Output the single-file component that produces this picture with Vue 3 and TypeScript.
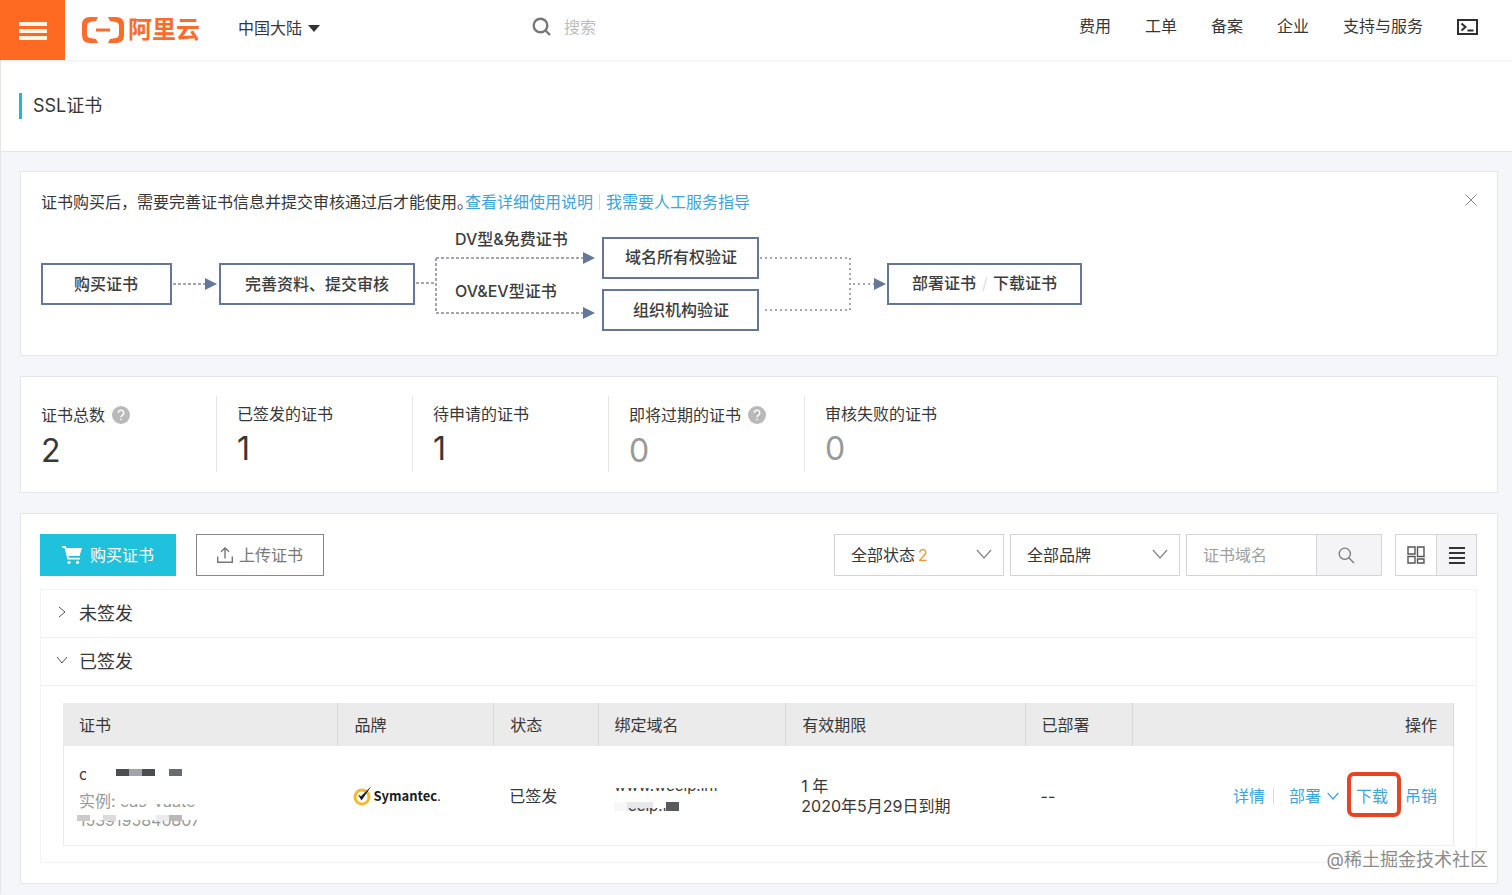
<script setup lang="ts">
import { ref } from 'vue'

interface Stat {
  label: string
  value: number
  help?: boolean
}

const navItems: string[] = ['费用', '工单', '备案', '企业', '支持与服务']

const stats: Stat[] = [
  { label: '证书总数', value: 2, help: true },
  { label: '已签发的证书', value: 1 },
  { label: '待申请的证书', value: 1 },
  { label: '即将过期的证书', value: 0, help: true },
  { label: '审核失败的证书', value: 0 },
]

const columns: string[] = ['证书', '品牌', '状态', '绑定域名', '有效期限', '已部署', '操作']

const noticeOpen = ref(true)
const pendingOpen = ref(false)
const issuedOpen = ref(true)
const view = ref<'grid' | 'list'>('list')
const keyword = ref('')
const domain = ref('')
</script>

<template>
  <div class="page">
    <header class="topbar">
      <button class="menu" type="button" aria-label="菜单"><i></i><i></i><i></i></button>
      <a class="logo" href="#">
        <svg width="42" height="28" viewBox="0 0 42 28" aria-hidden="true">
          <path d="M16 1H8Q0 1 0 9v10q0 8 8 8h8l-2-4-6-1q-3-1-3-4v-8q0-3 3-4l6-1z" />
          <path d="M26 1h8q8 0 8 8v10q0 8-8 8h-8l2-4 6-1q3-1 3-4v-8q0-3-3-4l-6-1z" />
          <path d="M14 12.500h14v3H14z" />
        </svg>
        <span>阿里云</span>
      </a>
      <button class="region" type="button">
        中国大陆
        <svg width="12" height="7" viewBox="0 0 12 7" aria-hidden="true"><path d="M0 0h12L6 7z" /></svg>
      </button>
      <label class="search">
        <svg width="20" height="20" viewBox="0 0 20 20" aria-hidden="true">
          <circle cx="8.500" cy="8.500" r="6.800" />
          <path d="M13.500 13.500l4.500 4.500" />
        </svg>
        <input v-model="keyword" type="text" placeholder="搜索" aria-label="搜索" />
      </label>
      <nav class="nav">
        <a v-for="item in navItems" :key="item" href="#">{{ item }}</a>
        <button type="button" aria-label="云命令行">
          <svg width="21" height="16" viewBox="0 0 21 16" aria-hidden="true">
            <rect x="1" y="1" width="19" height="14" />
            <path d="M4.500 4.500l4 3.500-4 3.500M10.500 11.500h6" />
          </svg>
        </button>
      </nav>
    </header>

    <div class="title-bar"><h1>SSL证书</h1></div>

    <main>
      <section v-if="noticeOpen" class="panel notice">
        <p>
          <span>证书购买后，需要完善证书信息并提交审核通过后才能使用。</span>
          <a class="guide" href="#">查看详细使用说明</a>
          <i class="sep"></i>
          <a href="#">我需要人工服务指导</a>
        </p>
        <button class="close" type="button" aria-label="关闭" @click="noticeOpen = false">
          <svg width="12" height="12" viewBox="0 0 12 12" aria-hidden="true"><path d="M.5.5l11 11M11.500.5l-11 11" /></svg>
        </button>
        <svg class="flow" width="1042" height="102" viewBox="0 0 1042 102" role="img" aria-label="证书申请流程">
          <g class="boxes">
            <rect x="1" y="34" width="129" height="40" />
            <rect x="179" y="34" width="194" height="40" />
            <rect x="562" y="8" width="155" height="40" />
            <rect x="562" y="60" width="155" height="40" />
            <rect x="847" y="34" width="193" height="40" />
          </g>
          <g class="dashes">
            <path d="M132 54h32M375 53h20M395 28v55M395 28h147M395 83h147" />
          </g>
          <g class="dots">
            <path d="M719 28h90v52h-88M812 54h21" />
          </g>
          <g class="heads">
            <path d="M164 48l12 6-12 6zM542 22l12 6-12 6zM542 77l12 6-12 6zM833 48l12 6-12 6z" />
          </g>
          <g class="labels">
            <text x="65" y="60" text-anchor="middle">购买证书</text>
            <text x="276" y="60" text-anchor="middle">完善资料、提交审核</text>
            <text x="414" y="15">DV型&amp;免费证书</text>
            <text x="414" y="67">OV&amp;EV型证书</text>
            <text x="640" y="33" text-anchor="middle">域名所有权验证</text>
            <text x="640" y="86" text-anchor="middle">组织机构验证</text>
            <text x="903" y="59" text-anchor="middle">部署证书</text>
            <text class="slash" x="944" y="59" text-anchor="middle">/</text>
            <text x="984" y="59" text-anchor="middle">下载证书</text>
          </g>
        </svg>
      </section>

      <section class="panel stats">
        <div v-for="s in stats" :key="s.label" class="stat">
          <div class="stat-label" :class="{ help: s.help }">
            {{ s.label }}
            <svg v-if="s.help" width="18" height="18" viewBox="0 0 18 18" aria-hidden="true">
              <circle cx="9" cy="9" r="9" />
              <path d="M6.300 7a2.700 2.700 0 1 1 4 2.300c-.9.5-1.300.9-1.300 2M9 12.800v1.400" />
            </svg>
          </div>
          <div class="stat-value" :class="{ zero: s.value === 0 }">{{ s.value }}</div>
        </div>
      </section>

      <section class="panel list">
        <div class="toolbar">
          <button class="buy" type="button">
            <svg width="20" height="18" viewBox="0 0 20 18" aria-hidden="true">
              <path d="M0 0h3.500l1 2H20l-2.500 8H6.500l.4 1.800H18v1.700H5.500L2.500 1.700H0z" />
              <circle cx="7" cy="16.300" r="1.600" />
              <circle cx="15.500" cy="16.300" r="1.600" />
            </svg>
            购买证书
          </button>
          <button class="upload" type="button">
            <svg width="16" height="16" viewBox="0 0 16 16" aria-hidden="true">
              <path d="M.7 9.500v5.800h14.600V9.500M8 11.500V1M4 4.800L8 .9l4 3.900" />
            </svg>
            上传证书
          </button>
          <div class="filters">
            <div class="select">
              <select aria-label="状态"><option>全部状态</option></select>
              <span class="count">2</span>
              <svg width="16" height="10" viewBox="0 0 16 10" aria-hidden="true"><path d="M1 1l7 8 7-8" /></svg>
            </div>
            <div class="select">
              <select aria-label="品牌"><option>全部品牌</option></select>
              <svg width="16" height="10" viewBox="0 0 16 10" aria-hidden="true"><path d="M1 1l7 8 7-8" /></svg>
            </div>
            <div class="domain">
              <input v-model="domain" type="text" placeholder="证书域名" aria-label="证书域名" />
              <button type="button" aria-label="查询">
                <svg width="17" height="17" viewBox="0 0 17 17" aria-hidden="true">
                  <circle cx="6.800" cy="6.800" r="5.600" />
                  <path d="M11 11l5 5" />
                </svg>
              </button>
            </div>
            <div class="views">
              <button type="button" aria-label="卡片" :class="{ on: view === 'grid' }" @click="view = 'grid'">
                <svg width="18" height="18" viewBox="0 0 18 18" aria-hidden="true">
                  <path d="M1 1h7v7H1zM10.500 1H17v9.500h-6.500zM1 10.500h7V17H1zM10.500 13H17v4h-6.500z" />
                </svg>
              </button>
              <button type="button" aria-label="列表" :class="{ on: view === 'list' }" @click="view = 'list'">
                <svg width="16" height="17" viewBox="0 0 16 17" aria-hidden="true">
                  <path class="bars" d="M0 1h16M0 6h16M0 11h16M0 16h16" />
                </svg>
              </button>
            </div>
          </div>
        </div>

        <div class="groups">
          <button class="group" type="button" :aria-expanded="pendingOpen" @click="pendingOpen = !pendingOpen">
            <svg width="12" height="12" viewBox="0 0 12 12" aria-hidden="true">
              <path :d="pendingOpen ? 'M1 3l5 6 5-6' : 'M3 1l6 5-6 5'" />
            </svg>
            未签发
          </button>
          <button class="group" type="button" :aria-expanded="issuedOpen" @click="issuedOpen = !issuedOpen">
            <svg width="12" height="12" viewBox="0 0 12 12" aria-hidden="true">
              <path :d="issuedOpen ? 'M1 3l5 6 5-6' : 'M3 1l6 5-6 5'" />
            </svg>
            已签发
          </button>
          <div v-if="issuedOpen" class="group-body">
            <table>
              <thead>
                <tr><th v-for="c in columns" :key="c" scope="col">{{ c }}</th></tr>
              </thead>
              <tbody>
                <tr>
                  <td>
                    <svg class="masked" width="126" height="60" viewBox="0 0 126 60">
                      <defs>
                        <clipPath id="cut-a"><rect x="0" y="0" width="7" height="18" /></clipPath>
                        <clipPath id="cut-b"><rect x="40" y="38" width="86" height="3" /></clipPath>
                        <clipPath id="cut-c"><rect x="0" y="54" width="126" height="9" /></clipPath>
                      </defs>
                      <text class="dark" x="0" y="14" clip-path="url(#cut-a)">c</text>
                      <path fill="#4b4e53" d="M37 3h13v7H37zM63 3h13v7H63z" />
                      <path fill="#a2a4a9" d="M50 3h13v7H50z" />
                      <path fill="#696c6e" d="M90 3h13v7H90z" />
                      <text x="0" y="41">实例:</text>
                      <text x="41" y="41" clip-path="url(#cut-b)">cas-vaate</text>
                      <text x="0" y="60" clip-path="url(#cut-c)">1539195846807</text>
                      <path fill="#cbcbcb" d="M-2 49h13v6H-2z" />
                      <path fill="#dcdcdc" d="M24 49h13v6H24z" />
                      <path fill="#ebebeb" d="M77 49h13v6H77z" />
                      <path fill="#b9b9b9" d="M90 49h13v6H90z" />
                    </svg>
                  </td>
                  <td>
                    <span class="brand">
                      <svg width="20" height="20" viewBox="0 0 20 20" aria-hidden="true">
                        <circle cx="9" cy="11" r="7" fill="none" stroke="#f6ba30" stroke-width="3" />
                        <path d="M5 8.500l3 1.800L18.500 0 8.500 14.500z" fill="#1c1c1c" />
                      </svg>
                      <b>Symantec</b><small>.</small>
                    </span>
                  </td>
                  <td>已签发</td>
                  <td>
                    <svg class="masked domain-mask" width="110" height="32" viewBox="0 0 110 32">
                      <defs>
                        <clipPath id="cut-d"><rect x="0" y="8" width="104" height="7" /></clipPath>
                        <clipPath id="cut-e"><rect x="10" y="28" width="60" height="6" /></clipPath>
                      </defs>
                      <text class="dark" x="0" y="11" clip-path="url(#cut-d)">www.weelp.inf</text>
                      <path fill="#f7f7f7" d="M0 22h13v9H0z" />
                      <path fill="#e8e8e8" d="M13 22h26v9H13z" />
                      <text class="dark" x="14" y="31" clip-path="url(#cut-e)">eelp.inf</text>
                      <path fill="#565a5c" d="M52 22h13v9H52z" />
                    </svg>
                  </td>
                  <td class="term">1 年<br />2020年5月29日到期</td>
                  <td>--</td>
                  <td>
                    <div class="actions">
                      <a href="#">详情</a>
                      <i class="sep"></i>
                      <a class="deploy" href="#">
                        部署
                        <svg width="12" height="8" viewBox="0 0 12 8" aria-hidden="true"><path d="M.7 1L6 7l5.300-6" /></svg>
                      </a>
                      <a class="marked" href="#">下载</a>
                      <a href="#">吊销</a>
                    </div>
                  </td>
                </tr>
              </tbody>
            </table>
          </div>
        </div>
      </section>
    </main>
    <div class="watermark">@稀土掘金技术社区</div>
  </div>
</template>

<style>
body {
  background: #f4f6fa;
}
</style>

<style scoped>
.page {
  position: relative;
  min-height: 100vh;
  box-sizing: border-box;
  font: 16px/20px Inter, "Noto Sans CJK SC", sans-serif;
  color: #373737;
  background: #f4f6fa;
}
.page *,
.page *::after {
  box-sizing: border-box;
}
button,
input,
select {
  font: inherit;
  color: inherit;
  margin: 0;
  padding: 0;
  border: 0;
  border-radius: 0;
  background: none;
  outline: none;
}
button {
  cursor: pointer;
}
a {
  color: #3ba5dc;
  text-decoration: none;
}
svg {
  display: block;
  flex: none;
}

.topbar {
  position: relative;
  z-index: 1;
  display: flex;
  align-items: center;
  height: 60px;
  padding-right: 34px;
  background: #fff;
  box-shadow: 0 1px 3px rgba(0, 0, 0, 0.08);
}
.menu {
  display: flex;
  flex-direction: column;
  align-items: center;
  justify-content: center;
  gap: 3px;
  width: 65px;
  height: 60px;
  padding-top: 2px;
  background: #ff6a22;
}
.menu i {
  width: 28px;
  height: 4px;
  background: #fff3ea;
}
.logo {
  display: flex;
  align-items: center;
  gap: 4px;
  margin-left: 17px;
  color: #fa6c2a;
  font-size: 24px;
  font-weight: 700;
}
.logo svg {
  fill: #fa6c2a;
}
.region {
  display: flex;
  align-items: center;
  gap: 6px;
  margin-left: 38px;
  padding-bottom: 4px;
}
.region svg {
  fill: #333;
}
.search {
  display: flex;
  flex: 1;
  align-items: center;
  gap: 12px;
  min-width: 0;
  margin-left: 14%;
  padding: 0 0 6px 5px;
}
.search svg {
  fill: none;
  stroke: #777;
  stroke-width: 2.4;
}
.search input {
  flex: 1;
  min-width: 0;
}
.search input::placeholder {
  color: #bdbdbd;
}
.nav {
  display: flex;
  align-items: center;
  gap: 34px;
  padding-bottom: 8px;
}
.nav a {
  color: #373737;
}
.nav button {
  padding-top: 2px;
}
.nav svg {
  fill: none;
  stroke: #2f2f2f;
  stroke-width: 2;
}

.title-bar {
  display: flex;
  align-items: center;
  height: 92px;
  padding-left: 18px;
  border-bottom: 1px solid #e4e6e9;
  border-left: 1px solid #e4e6e9;
  background: #fff;
}
h1 {
  margin: 0;
  padding-left: 11px;
  border-left: 3px solid #25b7cc;
  font-size: 18px;
  font-weight: 400;
  line-height: 26px;
}

main {
  display: flex;
  flex-direction: column;
  gap: 20px;
  padding: 19px 14px 10px 19px;
  border-left: 1px solid #e4e6e9;
}
.panel {
  border: 1px solid #e3e6ea;
  background: #fff;
}

.notice {
  position: relative;
  padding: 20px 20px 23px;
}
.notice p {
  display: flex;
  align-items: center;
  margin: 0 0 18px;
}
.notice .guide {
  margin-left: -8px;
}
.sep {
  width: 1px;
  height: 16px;
  margin: 0 8px;
  background: #d9d9d9;
}
.notice .sep {
  margin: 0 6px;
}
.close {
  position: absolute;
  top: 22px;
  right: 20px;
}
.close svg {
  fill: none;
  stroke: #888;
}
.flow {
  max-width: 100%;
}
.boxes rect {
  fill: none;
  stroke: #64779a;
  stroke-width: 2;
}
.dashes path,
.dots path {
  fill: none;
  stroke: #a3a6ab;
  stroke-width: 2;
  stroke-dasharray: 3 2;
}
.dots path {
  stroke-dasharray: 2 3;
}
.heads path {
  fill: #64789c;
}
.labels text {
  fill: #3d3d3d;
  font-weight: 500;
}
.labels .slash {
  fill: #e0e0e0;
  font-weight: 400;
}

.stats {
  display: flex;
  padding: 19px 0 20px;
}
.stat {
  width: 196px;
  height: 76px;
  padding: 8px 0 0 20px;
  border-right: 1px solid #e4e6e9;
}
.stat:last-child {
  border-right: 0;
}
.stat-label {
  display: flex;
  align-items: center;
  gap: 7px;
  height: 20px;
  white-space: nowrap;
}
.stat-label.help {
  height: 22px;
}
.stat-label circle {
  fill: #b9b9b9;
}
.stat-label path {
  fill: none;
  stroke: #fff;
  stroke-width: 1.4;
}
.stat-value {
  margin-top: 5px;
  font-size: 32px;
  line-height: 40px;
}
.stat-value.zero {
  color: #999;
}

.list {
  padding: 20px 20px 20px 19px;
}
.toolbar {
  display: flex;
  gap: 20px;
  height: 42px;
  margin-bottom: 13px;
}
.buy,
.upload {
  display: flex;
  align-items: center;
  justify-content: center;
}
.buy {
  gap: 8px;
  width: 136px;
  color: #fff;
  background: #20c1dc;
}
.buy svg {
  fill: #fff;
}
.upload {
  gap: 6px;
  width: 128px;
  border: 1px solid #888;
  color: #777;
}
.upload svg {
  fill: none;
  stroke: #777;
  stroke-width: 1.4;
}
.filters {
  display: flex;
  gap: 6px;
  margin-left: auto;
}
.select {
  position: relative;
  width: 170px;
}
.select select {
  width: 100%;
  height: 42px;
  padding: 0 16px;
  border: 1px solid #d5d5d5;
  background: #fff;
  appearance: none;
}
.select svg {
  position: absolute;
  top: 15px;
  right: 12px;
  fill: none;
  stroke: #888;
  stroke-width: 1.3;
  pointer-events: none;
}
.count {
  position: absolute;
  top: 11px;
  left: 84px;
  color: #f39530;
  pointer-events: none;
}
.domain {
  display: flex;
  width: 196px;
  border: 1px solid #d5d5d5;
}
.domain input {
  flex: 1;
  min-width: 0;
  padding-left: 16px;
}
.domain input::placeholder {
  color: #a0a0a0;
}
.domain button {
  display: flex;
  align-items: center;
  justify-content: center;
  width: 65px;
  padding-right: 6px;
  border-left: 1px solid #d5d5d5;
  background: #f4f4f6;
}
.domain svg {
  fill: none;
  stroke: #777;
  stroke-width: 1.3;
}
.views {
  display: flex;
  margin-left: 7px;
  border: 1px solid #d5d5d5;
}
.views button {
  display: flex;
  align-items: center;
  justify-content: center;
  width: 40px;
}
.views button + button {
  border-left: 1px solid #d5d5d5;
}
.views .on {
  background: #f4f4f6;
}
.views svg {
  fill: none;
  stroke: #555;
  stroke-width: 1.4;
}
.views .bars {
  stroke: #333;
  stroke-width: 2;
}

.groups {
  border: 1px solid #f2f3f4;
}
.group {
  display: flex;
  align-items: center;
  gap: 11px;
  width: 100%;
  height: 48px;
  padding-left: 15px;
  border-bottom: 1px solid #eeeff0;
  font-size: 18px;
}
.group svg {
  margin-bottom: 4px;
  fill: none;
  stroke: #555;
}
.group-body {
  padding: 17px 22px 16px;
}

table {
  width: 100%;
  border-collapse: separate;
  border-spacing: 0;
  table-layout: fixed;
}
th {
  height: 43px;
  padding: 0 16px;
  border-right: 1px solid #d8d8d8;
  background: #ebebeb;
  font-weight: 400;
  text-align: left;
}
th:nth-child(1) { width: 19.8%; }
th:nth-child(2) { width: 11.2%; }
th:nth-child(3) { width: 7.5%; }
th:nth-child(4) { width: 13.5%; }
th:nth-child(5) { width: 17.2%; }
th:nth-child(6) { width: 7.7%; }
th:last-child {
  text-align: right;
}
td {
  height: 100px;
  padding: 0 16px 0 15px;
  border-bottom: 1px solid #eeeff0;
  white-space: nowrap;
}
td:first-child {
  border-left: 1px solid #e9e9e9;
}
td:last-child {
  border-right: 1px solid #e9e9e9;
}
.masked {
  overflow: visible;
}
.masked text {
  fill: #999;
}
.masked .dark {
  fill: #3a3a3a;
}
.domain-mask text {
  font-size: 15px;
}
.brand {
  display: flex;
  align-items: center;
  color: #1c1c1c;
  font-family: "Noto Sans CJK SC", sans-serif;
}
.brand b {
  font-size: 13px;
}
.brand small {
  font-size: 12px;
}
.actions {
  display: flex;
  align-items: center;
  justify-content: flex-end;
}
.deploy {
  display: flex;
  align-items: center;
  gap: 6px;
  margin: 0 17px 0 7px;
}
.deploy svg {
  fill: none;
  stroke: #3ba5dc;
  stroke-width: 1.2;
}
.marked {
  position: relative;
  margin-right: 17px;
}
.marked::after {
  content: "";
  position: absolute;
  inset: -14px -13px -11px -9px;
  border: 4px solid #e94420;
  border-radius: 7px;
}
.watermark {
  position: absolute;
  right: 24px;
  bottom: 24px;
  color: #8c8c8c;
  font-size: 18px;
  line-height: 22px;
  text-shadow: 1px 1px 1px #fff, -1px -1px 1px #fff;
  pointer-events: none;
}
</style>
